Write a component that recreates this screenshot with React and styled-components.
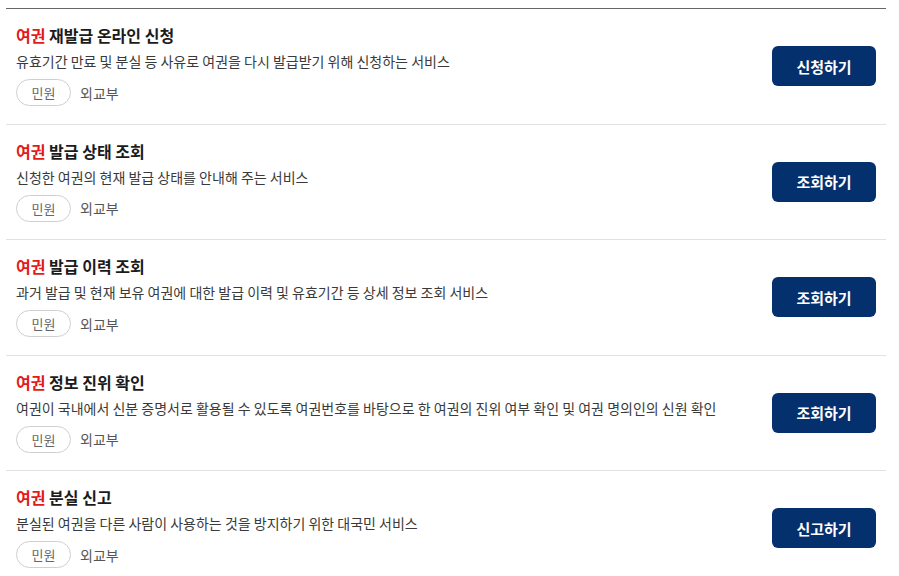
import styled, { createGlobalStyle } from 'styled-components';

const GlobalStyle = createGlobalStyle`
  body {
    margin: 0;
    background: #fff;
    font-family: "Noto Sans CJK KR", "Noto Sans", sans-serif;
  }
`;

const services = [
  {
    title: '재발급 온라인 신청',
    desc: '유효기간 만료 및 분실 등 사유로 여권을 다시 발급받기 위해 신청하는 서비스',
    action: '신청하기',
  },
  {
    title: '발급 상태 조회',
    desc: '신청한 여권의 현재 발급 상태를 안내해 주는 서비스',
    action: '조회하기',
  },
  {
    title: '발급 이력 조회',
    desc: '과거 발급 및 현재 보유 여권에 대한 발급 이력 및 유효기간 등 상세 정보 조회 서비스',
    action: '조회하기',
  },
  {
    title: '정보 진위 확인',
    desc: '여권이 국내에서 신분 증명서로 활용될 수 있도록 여권번호를 바탕으로 한 여권의 진위 여부 확인 및 여권 명의인의 신원 확인',
    action: '조회하기',
  },
  {
    title: '분실 신고',
    desc: '분실된 여권을 다른 사람이 사용하는 것을 방지하기 위한 대국민 서비스',
    action: '신고하기',
  },
];

function App() {
  return (
    <>
      <GlobalStyle />
      <ListStyled>
        {services.map((s, i) => (
          <Row key={i} $last={i === services.length - 1}>
            <Info>
              <Title>
                <Keyword>여권</Keyword> {s.title}
              </Title>
              <Desc>{s.desc}</Desc>
              <Meta>
                <Tag>민원</Tag>
                <Org>외교부</Org>
              </Meta>
            </Info>
            <ActionButton>{s.action}</ActionButton>
          </Row>
        ))}
      </ListStyled>
    </>
  );
}

const ListStyled = styled.ul`
  list-style: none;
  margin: 8px 0 0 6px;
  padding: 0;
  width: 880px;
  border-top: 1px solid #666;
`;

const Row = styled.li`
  display: flex;
  align-items: center;
  justify-content: space-between;
  padding: 14px 10px 17.5px;
  border-bottom: ${({ $last }) => ($last ? 'none' : '1px solid #e2e2e2')};
`;

const Info = styled.div`
  display: flex;
  flex-direction: column;
`;

const Title = styled.h3`
  margin: 0;
  font-size: 16px;
  line-height: 24px;
  font-weight: 700;
  color: #1b1b1b;
`;

const Keyword = styled.span`
  color: #e21a1a;
`;

const Desc = styled.p`
  margin: 3px 0 0;
  font-size: 14px;
  line-height: 22px;
  color: #3a3a3a;
`;

const Meta = styled.div`
  display: flex;
  align-items: center;
  gap: 9px;
  margin-top: 7px;
`;

const Tag = styled.span`
  display: inline-flex;
  align-items: center;
  justify-content: center;
  box-sizing: border-box;
  width: 55px;
  height: 27px;
  border: 1px solid #cfcfcf;
  border-radius: 14px;
  font-size: 13px;
  color: #666;
`;

const Org = styled.span`
  font-size: 14px;
  color: #555;
`;

const ActionButton = styled.button`
  flex-shrink: 0;
  width: 104px;
  height: 40px;
  margin-top: 3px;
  border: none;
  border-radius: 6px;
  background: #05306e;
  color: #fff;
  font-family: inherit;
  font-size: 15px;
  font-weight: 700;
  cursor: pointer;
`;

export default App;
